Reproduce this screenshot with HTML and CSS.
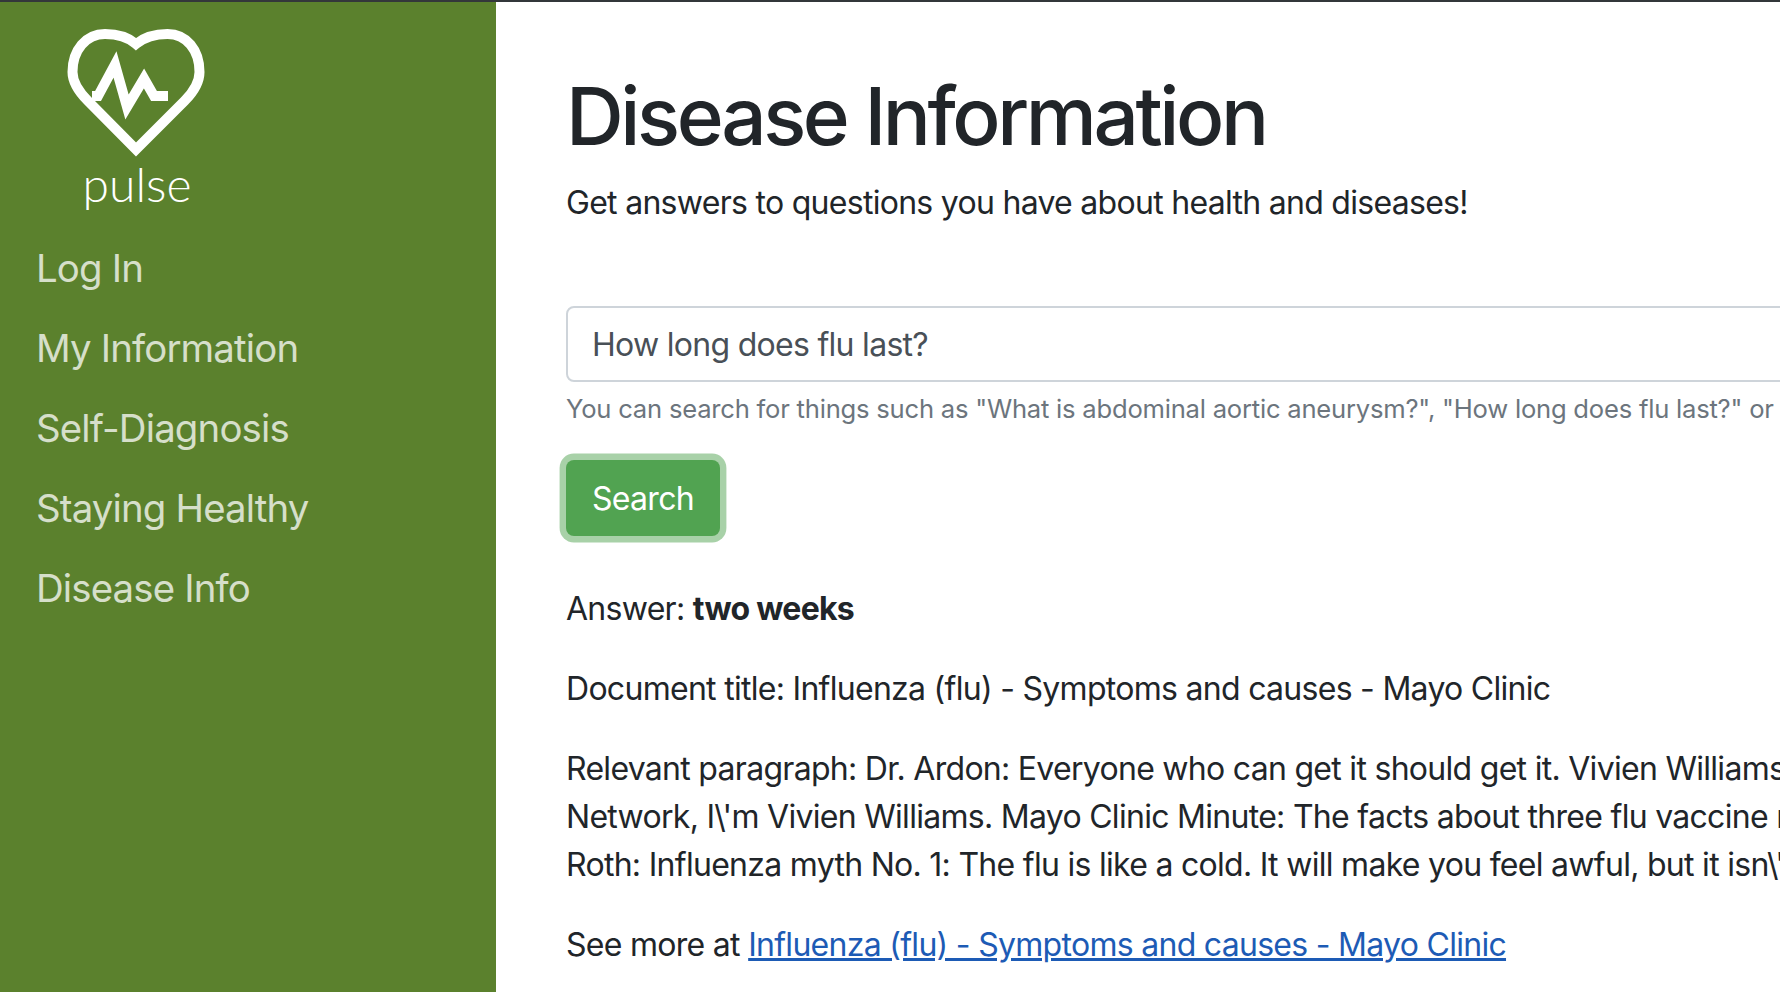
FILE: index.html
```html
<!DOCTYPE html>
<html lang="en">
<head>
    <meta charset="UTF-8">
    <title>Disease Information</title>
    <link rel="stylesheet" href="styles.css">
</head>
<body>
    <div class="topline"></div>
    <div class="page">
        <aside class="sidebar">
            <div class="logo">
                <svg class="logo-heart" viewBox="66 26 142 132" width="142" height="132">
                    <path class="heart-line" d="M136 44 C128 37 116 34 105 34 C86 34 72.500 50 72.500 72 C72.500 83 79 92 88 101 L136 149.500 L184.500 101 C193.500 92 199.500 83 199.500 72 C199.500 50 186.500 34 167.500 34 C156.500 34 144.500 37 136 44 Z"/>
                    <path class="heart-pulse" d="M92 96 H98 L115 64.500 L127 107 L144 78.500 L154 96 H168"/>
                </svg>
                <span class="logo-text">pulse</span>
            </div>
            <nav class="menu">
                <a href="#">Log In</a>
                <a href="#">My Information</a>
                <a href="#">Self-Diagnosis</a>
                <a href="#">Staying Healthy</a>
                <a href="#">Disease Info</a>
            </nav>
        </aside>

        <main class="content">
            <h1>Disease Information</h1>
            <p class="lead">Get answers to questions you have about health and diseases!</p>

            <form class="search">
                <input class="search-input" type="text" value="How long does flu last?">
                <small class="hint">You can search for things such as "What is abdominal aortic aneurysm?", "How long does flu last?" or "What are the symptoms of diabetes?"</small>
                <button class="search-btn" type="button">Search</button>
            </form>

            <p>Answer: <b>two weeks</b></p>
            <p>Document title: Influenza (flu) - Symptoms and causes - Mayo Clinic</p>
            <p>Relevant paragraph: Dr. Ardon: Everyone who can get it should get it. Vivien Williams: Get the flu shot.<br>
            Network, I\'m Vivien Williams. Mayo Clinic Minute: The facts about three flu vaccine myths<br>
            Roth: Influenza myth No. 1: The flu is like a cold. It will make you feel awful, but it isn\'t serious</p>
            <p>See more at <a href="#">Influenza (flu) - Symptoms and causes - Mayo Clinic</a></p>
        </main>
    </div>
</body>
</html>
```

FILE: styles.css
```css
* {
    box-sizing: border-box;
}

html, body {
    margin: 0;
    height: 100%;
    overflow: hidden;
}

body {
    background-color: #fff;
    color: #212529;
    font-family: "Inter", "Liberation Sans", sans-serif;
    font-size: 32px;
    line-height: 48px;
    letter-spacing: -0.71px;
}

.topline {
    height: 2px;
    background-color: #33373a;
}

.page {
    display: flex;
    height: 990px;
}

.sidebar {
    flex: 0 0 496px;
    background-color: #5b812d;
    padding: 24px 0 0 36px;
}

.logo {
    display: flex;
    flex-direction: column;
    align-items: center;
    width: 202px;
}

.logo-heart {
    display: block;
}

.heart-line, .heart-pulse {
    fill: none;
    stroke: #fff;
    stroke-width: 10;
    stroke-miterlimit: 10;
}

.logo-text {
    color: #fff;
    font-family: "Lato", sans-serif;
    font-weight: 300;
    font-size: 48px;
    line-height: 52px;
    letter-spacing: 0;
}

.menu {
    display: flex;
    flex-direction: column;
    margin-top: 18px;
}

.menu a {
    height: 80px;
    line-height: 80px;
    font-size: 38.4px;
    letter-spacing: -0.85px;
    color: rgba(255, 255, 255, 0.75);
    text-decoration: none;
    white-space: nowrap;
}

.content {
    flex: 1;
    min-width: 0;
    padding: 65px 0 0 70px;
    white-space: nowrap;
    overflow: hidden;
}

h1 {
    margin: 0 0 14px;
    font-size: 80px;
    font-weight: 500;
    line-height: 98px;
    letter-spacing: -3.4px;
}

p {
    margin: 0 0 32px;
}

.lead {
    margin-bottom: 79px;
}

.search {
    margin-bottom: 49px;
}

.search-input {
    display: block;
    width: 1400px;
    height: 76px;
    padding: 0 24px;
    border: 2px solid #ced4da;
    border-radius: 8px;
    color: #495057;
    font: inherit;
    letter-spacing: inherit;
}

.hint {
    display: block;
    margin: 8px 0 32px;
    font-size: 25.6px;
    line-height: 38px;
    color: #6c757d;
    letter-spacing: -0.22px;
}

.search-btn {
    display: block;
    width: 154px;
    height: 76px;
    padding: 2px 0 0;
    border: 0;
    border-radius: 8px;
    background-color: #51a351;
    box-shadow: 0 0 0 6.4px rgba(81, 163, 81, 0.5);
    color: #fff;
    font: inherit;
    letter-spacing: inherit;
}

.content a {
    color: #1d5bb5;
}
```
